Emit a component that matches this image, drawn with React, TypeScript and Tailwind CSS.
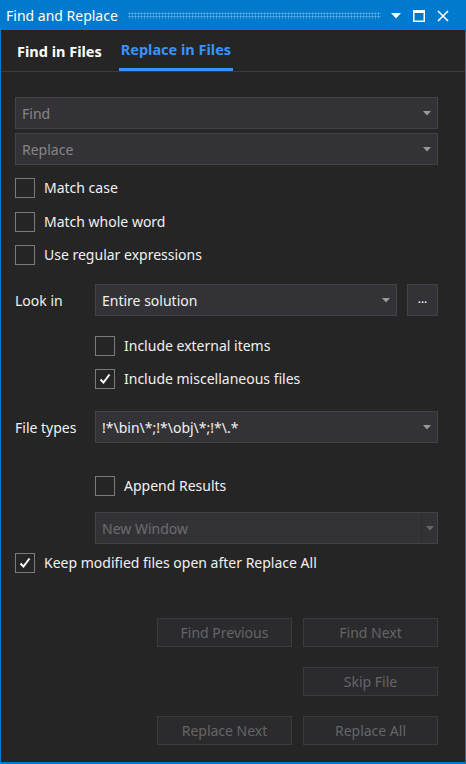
import React from 'react';

const font = 'font-["Noto_Sans","Open_Sans",sans-serif]';

function Arrow({ className = '' }: { className?: string }) {
	return (
		<svg width="8" height="5" viewBox="0 0 8 5" className={className}>
			<path d="M0 0H8L4 4.5Z" fill="#9a9a9a" />
		</svg>
	);
}

function Combo({ text, muted, disabled, className = '' }: { text: string; muted?: boolean; disabled?: boolean; className?: string }) {
	return (
		<div className={`flex items-center h-[32px] bg-[#333337] border border-[#434346] ${className}`}>
			<span className={`flex-1 pl-[6px] text-[14px] ${muted ? 'text-[#858585]' : disabled ? 'text-[#6d6d6d]' : 'text-[#f1f1f1]'}`}>{text}</span>
			{disabled ? (
				<div className="h-full w-[16px] flex items-center justify-center border-l border-[#2d2d30]">
					<Arrow className="opacity-50" />
				</div>
			) : (
				<Arrow className="mr-[6px]" />
			)}
		</div>
	);
}

function Check({ label, checked, className = '' }: { label: string; checked?: boolean; className?: string }) {
	return (
		<div className={`flex items-center ${className}`}>
			<div className="w-[20px] h-[20px] border border-[#7a7a7a] flex items-center justify-center shrink-0">
				{checked && (
					<svg width="14" height="14" viewBox="0 0 14 14">
						<path d="M2.5 7.5L5.5 10.5L11.5 2.5" stroke="#ffffff" strokeWidth="2" fill="none" />
					</svg>
				)}
			</div>
			<span className="ml-[9px] text-[14px] text-[#f1f1f1]">{label}</span>
		</div>
	);
}

function Btn({ label }: { label: string }) {
	return (
		<div className="w-[135px] h-[29px] flex items-center justify-center bg-[#2b2b2e] border border-[#3b3b3f] text-[14px] text-[#656565]">
			{label}
		</div>
	);
}

export default function App() {
	return (
		<div className={`w-[466px] h-[764px] flex flex-col bg-[#252526] border border-[#007acc] border-b-[2px] ${font}`}>
			{/* Title bar */}
			<div className="h-[29px] bg-[#007acc] flex items-center pl-[5px] pr-[16px] shrink-0">
				<span className="text-[14px] text-white">Find and Replace</span>
				<div className="flex-1 h-[7px] ml-[10px] mr-[10px] bg-[radial-gradient(circle,#6cb3e6_0.9px,transparent_1.1px)] bg-[length:3px_3px]" />
				<div className="flex items-center gap-[12px]">
					<svg width="10" height="6" viewBox="0 0 10 6">
						<path d="M0 0H10L5 5.5Z" fill="#ffffff" />
					</svg>
					<svg width="12" height="12" viewBox="0 0 12 12">
						<rect x="0.75" y="0.75" width="10.5" height="10.5" stroke="#fff" strokeWidth="1.5" fill="none" />
						<rect x="0" y="0" width="12" height="3" fill="#fff" />
					</svg>
					<svg width="12" height="12" viewBox="0 0 12 12">
						<path d="M1 1L11 11M11 1L1 11" stroke="#fff" strokeWidth="1.6" />
					</svg>
				</div>
			</div>

			{/* Tabs */}
			<div className="h-[42px] flex items-stretch pl-[16px] border-b border-[#3a3a3d] shrink-0">
				<div className="flex items-center pt-[2px] text-[14.5px] font-bold text-white">Find in Files</div>
				<div className="flex items-center pt-[2px] ml-[17px] px-[2px] text-[14.5px] font-bold text-[#3794ff] border-b-[3px] border-[#3794ff]">
					Replace in Files
				</div>
			</div>

			{/* Body */}
			<div className="flex flex-col pl-[14px] pr-[27px] pt-[25px]">
				<Combo text="Find" muted />
				<Combo text="Replace" muted className="mt-[4px]" />
				<Check label="Match case" className="mt-[12px]" />
				<Check label="Match whole word" className="mt-[13px]" />
				<Check label="Use regular expressions" className="mt-[12px]" />

				<div className="flex items-center mt-[19px]">
					<span className="w-[80px] text-[14px] text-[#f1f1f1]">Look in</span>
					<Combo text="Entire solution" className="flex-1" />
					<div className="ml-[10px] w-[31px] h-[32px] bg-[#333337] border border-[#434346] flex items-center justify-center pb-[2px] text-[12px] text-white">
						...
					</div>
				</div>
				<div className="pl-[80px] flex flex-col">
					<Check label="Include external items" className="mt-[19px]" />
					<Check label="Include miscellaneous files" checked className="mt-[12px]" />
				</div>

				<div className="flex items-center mt-[22px]">
					<span className="w-[80px] text-[14px] text-[#f1f1f1]">File types</span>
					<Combo text="!*\bin\*;!*\obj\*;!*\.*" className="flex-1" />
				</div>
				<div className="pl-[80px] flex flex-col">
					<Check label="Append Results" className="mt-[32px]" />
					<Combo text="New Window" disabled className="mt-[16px]" />
				</div>
				<Check label="Keep modified files open after Replace All" checked className="mt-[8px]" />

				<div className="flex flex-col items-end gap-[20px] mt-[45px]">
					<div className="flex gap-[11px]">
						<Btn label="Find Previous" />
						<Btn label="Find Next" />
					</div>
					<Btn label="Skip File" />
					<div className="flex gap-[11px]">
						<Btn label="Replace Next" />
						<Btn label="Replace All" />
					</div>
				</div>
			</div>
		</div>
	);
}
